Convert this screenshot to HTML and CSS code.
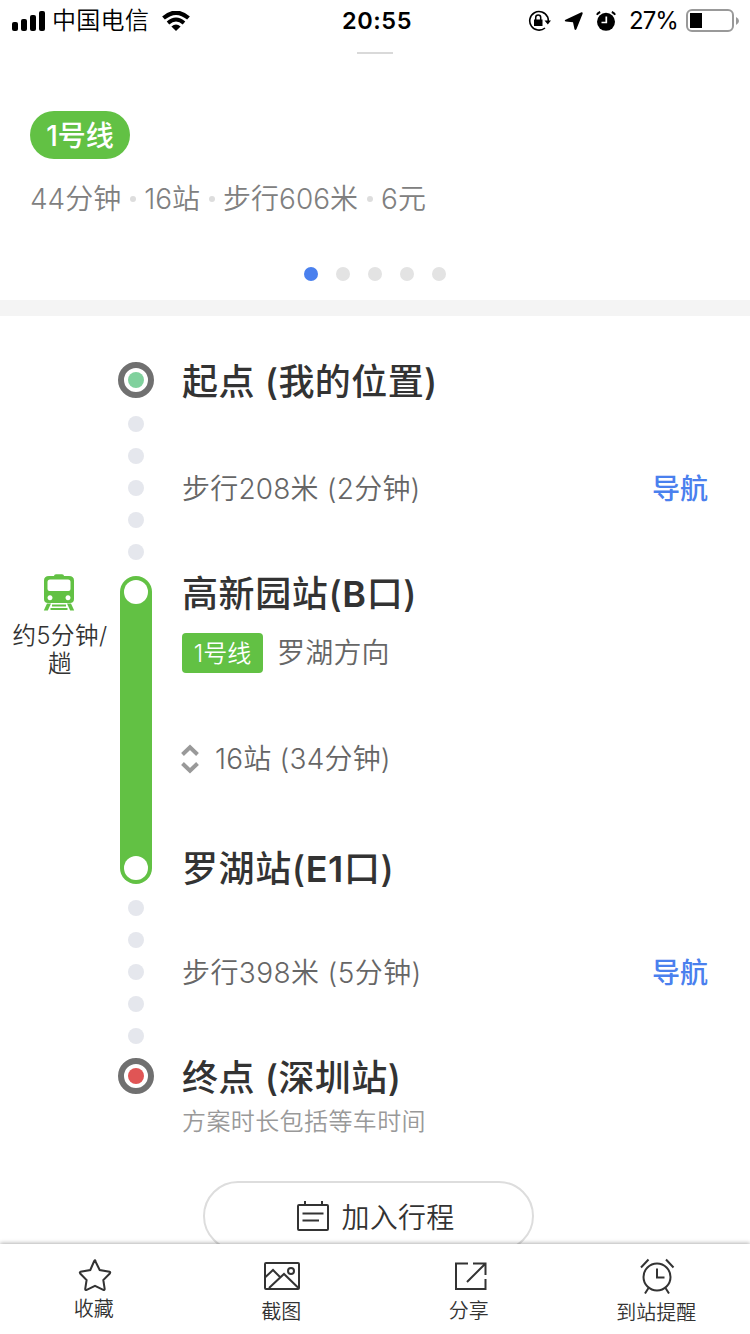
FILE: index.html
```html
<!DOCTYPE html>
<html lang="zh-CN">
<head>
<meta charset="utf-8">
<title>1号线</title>
<link rel="stylesheet" href="styles.css">
</head>
<body>
<div class="screen">
  <header class="status">
    <div class="status-left">
      <svg class="signal" width="34" height="20" viewBox="0 0 34 20"><rect x="0" y="11" width="6" height="9" rx="2"/><rect x="9" y="8" width="6" height="12" rx="2"/><rect x="18" y="4" width="6" height="16" rx="2"/><rect x="27" y="0" width="6" height="20" rx="2"/></svg>
      <span class="carrier">中国电信</span>
      <svg class="wifi" width="28" height="20" viewBox="0 0 28 20"><path d="M1.500 7Q14-3.600 26.500 7" fill="none" stroke="#000" stroke-width="4.200"/><path d="M6 12Q14 4.800 22 12" fill="none" stroke="#000" stroke-width="3.800"/><path d="M9.400 15.600Q14 11.600 18.600 15.600L14 20Z"/></svg>
    </div>
    <div class="clock">20:55</div>
    <div class="status-right">
      <svg class="lock" width="24" height="22" viewBox="0 0 24 22"><path d="M19.500 7A9.300 9.300 0 1 0 17 18M19.500 6.500Q20.300 8.500 20.300 11" fill="none" stroke="#000" stroke-width="1.600"/><path d="M16.500 10.500h6.500l-3.200 4zM6 9.500h8.500v6.500H6z"/><path d="M7.700 10V7.500a2.500 2.500 0 0 1 5 0V10" fill="none" stroke="#000" stroke-width="1.500"/></svg>
      <svg class="arrow" width="20" height="20" viewBox="0 0 20 20"><path d="M1 9 17.500 1.300Q19.200 1 18.600 2.800L12.500 18Q11.500 19.800 10.500 18.200L9 11.200 1.800 10.500Q.200 10 1 9Z"/></svg>
      <svg class="alarm-sm" width="20" height="20" viewBox="0 0 20 20"><circle cx="10" cy="10.800" r="9"/><path d="M.800 3.800Q2 1.800 4.200 1M15.800 1Q18 1.800 19.200 3.800" fill="none" stroke="#000" stroke-width="2"/><path d="M10.300 5.500v6H5.500" fill="none" stroke="#fff" stroke-width="1.700"/></svg>
      <span class="percent">27%</span>
      <svg class="battery" width="53" height="24" viewBox="0 0 53 24"><rect x="1" y="1" width="46" height="21" rx="5" fill="#fff" stroke="#999" stroke-width="2"/><rect x="4" y="4" width="12" height="15"/><path d="M50 8v8q3-1.500 3-4t-3-4z" fill="#999"/></svg>
    </div>
  </header>

  <section class="summary">
    <div class="handle"></div>
    <div class="line-pill">1号线</div>
    <div class="facts"><span>44分钟</span><i></i><span>16站</span><i></i><span>步行606米</span><i></i><span>6元</span></div>
    <div class="pager"><i class="on"></i><i></i><i></i><i></i><i></i></div>
  </section>

  <main class="route">
    <section class="leg leg-first">
      <div class="rail">
        <div class="node start"></div>
        <div class="dots"><i></i><i></i><i></i><i></i><i></i></div>
      </div>
      <div class="info">
        <h2 class="t-start">起点 (我的位置)</h2>
        <div class="walk"><span>步行208米 (2分钟)</span><a>导航</a></div>
      </div>
    </section>

    <section class="leg leg-metro">
      <div class="freq">
        <svg width="32" height="38" viewBox="0 0 32 38" fill="#62c144"><path fill-rule="evenodd" d="M6 2H11Q11 .300 13 .300h6q2 0 2 1.700h5q5 0 5 4.500V25q0 4-4 4H5q-4 0-4-4V6.500Q1 2 6 2ZM7 5.500Q4.500 5.500 4.500 8v7q0 2 2 2h19q2 0 2-2V8q0-2.500-2.500-2.500ZM7 21.300a2.500 2.500 0 1 0 .010 0ZM25 21.300a2.500 2.500 0 1 0 .010 0Z"/><path d="M4 29.500h4L4.800 36.500H.800ZM28 29.500h-4L27.200 36.500h4ZM9 30.500h14v2H9zM7.500 34h17v2h-17z"/></svg>
        <p>约5分钟/<br>趟</p>
      </div>
      <div class="rail"><div class="track"><i></i><i></i></div></div>
      <div class="info">
        <h2 class="t-board">高新园站(<b>B</b>口)</h2>
        <div class="direction"><span class="tag">1号线</span><span class="toward">罗湖方向</span></div>
        <div class="stops"><svg width="18" height="30" viewBox="0 0 18 30" fill="none" stroke="#999" stroke-width="4"><path d="M1.500 10.500 9 3.300l7.500 7.200M1.500 19.500 9 26.700l7.500-7.200"/></svg><span>16站 (34分钟)</span></div>
        <h2 class="t-exit">罗湖站(<b>E1</b>口)</h2>
      </div>
    </section>

    <section class="leg leg-last">
      <div class="rail">
        <div class="dots"><i></i><i></i><i></i><i></i><i></i></div>
        <div class="node end"></div>
      </div>
      <div class="info">
        <div class="walk"><span>步行398米 (5分钟)</span><a>导航</a></div>
        <h2 class="t-end">终点 (深圳站)</h2>
        <p class="note">方案时长包括等车时间</p>
      </div>
    </section>

    <button class="add"><svg width="34" height="32" viewBox="0 0 34 32" fill="none" stroke="#333" stroke-width="2"><rect x="2" y="5" width="30" height="25" rx="1"/><path d="M9 1v5M26 1v5M6.500 13.500h21M6.500 20.500h16.500"/></svg><span>加入行程</span></button>
  </main>

  <nav class="toolbar">
    <a class="tool save"><svg width="34" height="34" viewBox="0 0 34 34"><path d="M17 2.500 21.700 12 31.500 13.800Q32.800 14.300 31.800 15.500L25.300 22 26.700 31Q26.700 32.500 25.300 31.800L17 27.800 8.700 31.800Q7.200 32.500 7.200 31L8.600 22 2.200 15.500Q1.300 14.300 2.500 13.800L12.300 12 16.200 3Q17 1.700 17.700 3Z"/></svg><span>收藏</span></a>
    <a class="tool shot"><svg width="36" height="28" viewBox="0 0 36 28"><rect x="1" y="1" width="34" height="26" rx="1"/><circle cx="27" cy="9" r="3"/><path d="M1.500 15 9 8l7.500 7.500M5 26 20 12l14.500 14"/></svg><span>截图</span></a>
    <a class="tool share"><svg width="34" height="30" viewBox="0 0 34 30"><path d="M14 2.500H2V28h29.500V18M19 2.500h12.500V14M13 21 31 3"/></svg><span>分享</span></a>
    <a class="tool remind"><svg width="36" height="36" viewBox="0 0 36 36"><circle cx="18" cy="19" r="13.500"/><path d="M18 10.500V19.500h7.500M2 9.500 9.500 1.500M34.500 9.500 27 1.500M9.500 30 6 35.500M26.500 30 30 35.500"/></svg><span>到站提醒</span></a>
  </nav>
</div>
</body>
</html>
```

FILE: styles.css
```css
* { box-sizing: border-box; }
body { margin: 0; background: #fff; font-family: Inter, "Noto Sans CJK SC", sans-serif; font-weight: 350; color: #333; }
h2, p { margin: 0; }
svg { display: block; flex: none; }
.screen { width: 750px; height: 1334px; display: flex; flex-direction: column; overflow: hidden; background: #fff; }

.status { height: 40px; display: grid; grid-template-columns: 1fr auto 1fr; align-items: center; color: #000; flex: none; }
.status-left { display: flex; align-items: center; padding-left: 12px; }
.carrier { font-size: 24px; line-height: 40px; margin-left: 6px; letter-spacing: .3px; padding-top: 1px; }
.wifi { margin-left: 13px; }
.clock { font-size: 23.500px; font-weight: 600; letter-spacing: .6px; line-height: 40px; padding-top: 1px; padding-left: 4px; }
.status-right { display: flex; align-items: center; justify-content: flex-end; padding-right: 11px; }
.arrow { margin-left: 12px; }
.alarm-sm { margin-left: 12px; }
.percent { font-size: 24px; font-weight: 400; margin-left: 13px; line-height: 40px; padding-top: 1px; letter-spacing: -.9px; }
.battery { margin-left: 8px; }

.summary { height: 276px; flex: none; display: flex; flex-direction: column; align-items: flex-start; border-bottom: 16px solid #f4f4f4; }
.handle { width: 36px; height: 2px; background: #d9d9d9; margin-top: 12px; align-self: center; }
.line-pill { width: 100px; height: 48px; border-radius: 24px; background: #62c144; color: #fff; font-size: 28px; font-weight: 500; line-height: 50px; text-align: center; margin: 57px 0 0 30px; }
.facts { display: flex; align-items: center; height: 40px; margin: 20px 0 0 30px; font-size: 28px; color: #808080; line-height: 40px; }
.facts i { width: 6px; height: 6px; border-radius: 50%; background: #ddd; margin: 0 8.500px; }
.pager { display: flex; gap: 18px; align-self: center; margin-top: 48px; }
.pager i { width: 14px; height: 14px; border-radius: 50%; background: #e3e3e3; }
.pager .on { background: #4a80ee; }

.route { flex: 1; min-height: 0; overflow: hidden; display: flex; flex-direction: column; }
.leg { display: grid; grid-template-columns: 118px 36px 1fr; flex: none; }
.leg-first { height: 260px; }
.leg-metro { height: 308px; }
.leg-last { height: 297px; }
.rail { grid-column: 2; grid-row: 1; display: flex; flex-direction: column; align-items: center; }
.info { grid-column: 3; grid-row: 1; padding: 0 42px 0 28px; display: flex; flex-direction: column; }
.node { width: 36px; height: 36px; border-radius: 50%; border: 6px solid #707070; padding: 4px; background-clip: content-box; flex: none; }
.start { margin-top: 46px; background-color: #80d19d; }
.end { margin-top: 14px; background-color: #e05555; }
.dots { display: flex; flex-direction: column; gap: 16px; margin-top: 18px; }
.leg-last .dots { margin-top: 16px; }
.dots i { width: 16px; height: 16px; border-radius: 50%; background: #e5e7ed; }
.track { width: 32px; height: 308px; border-radius: 16px; background: #62c144; display: flex; flex-direction: column; align-items: center; justify-content: space-between; padding: 4px; }
.track i { width: 24px; height: 24px; border-radius: 50%; background: #fff; }

h2 { font-size: 36px; font-weight: 500; line-height: 50px; white-space: nowrap; letter-spacing: .4px; }
h2 b { font-weight: 600; }
.t-start { margin-top: 41px; }
.walk { display: flex; justify-content: space-between; font-size: 28px; line-height: 40px; color: #666; }
.walk span { letter-spacing: .2px; }
.leg-first .walk { margin-top: 62px; }
.walk a { color: #4a80ee; font-weight: 500; }
.freq { grid-column: 1; grid-row: 1; display: flex; flex-direction: column; align-items: center; margin-top: -2px; }
.freq p { font-size: 23.500px; line-height: 28px; text-align: center; margin-top: 10px; margin-left: 2px; white-space: nowrap; letter-spacing: .5px; }
.t-board { margin-top: -7px; letter-spacing: .6px; }
.direction { display: flex; align-items: center; margin-top: 14px; height: 40px; }
.tag { width: 81px; height: 40px; border-radius: 4px; background: #62c144; color: #fff; font-size: 24px; line-height: 42px; text-align: center; }
.toward { font-size: 28px; color: #666; line-height: 42px; margin-left: 14px; letter-spacing: .2px; }
.stops { display: flex; align-items: center; height: 40px; margin-top: 66px; margin-left: -1px; font-size: 28px; color: #666; }
.stops span { margin-left: 16px; line-height: 42px; letter-spacing: .2px; }
.t-exit { margin-top: 65px; letter-spacing: .6px; }
.leg-last .walk { margin-top: 69px; }
.leg-last .walk span { letter-spacing: .4px; }
.t-end { margin-top: 60px; }
.note { font-size: 24px; letter-spacing: .4px; line-height: 34px; color: #999; margin-top: 2px; }
.add { width: 331px; height: 70px; flex: none; margin-left: 203px; border: 2px solid #ddd; border-radius: 35px; background: #fff; color: #333; font: inherit; font-size: 28px; display: flex; align-items: center; justify-content: center; gap: 12px; padding: 0 0 1px 13px; }
.add span { letter-spacing: .2px; }

.toolbar { height: 90px; flex: none; display: grid; grid-template-columns: repeat(4, 1fr); background: #fff; box-shadow: 0 -1px 4px rgba(0,0,0,.3); position: relative; }
.tool { display: flex; flex-direction: column; align-items: center; font-size: 20px; line-height: 28px; }
.tool svg { fill: none; stroke: #333; stroke-width: 2; margin-left: 2px; }
.save svg { margin-top: 14px; }
.save span { margin-top: 3px; }
.shot svg { margin-top: 18px; }
.shot span { margin-top: 8px; }
.share svg { margin-top: 17px; margin-left: 4px; }
.share span { margin-top: 6px; }
.remind svg { margin-top: 14px; }
.remind span { margin-top: 5px; }
```
